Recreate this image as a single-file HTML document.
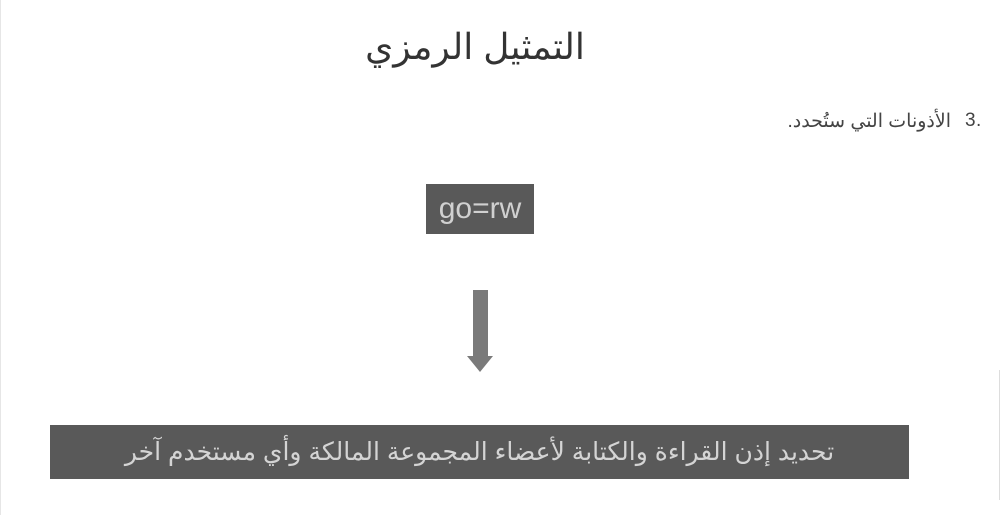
<!DOCTYPE html>
<html><head><meta charset="utf-8"><style>
body{margin:0;width:1001px;height:515px;background:#fff;position:relative;overflow:hidden;font-family:"Liberation Sans","Noto Sans CJK SC",sans-serif}
.a{position:absolute}
</style></head><body>
<div class="a" style="left:0;top:0;width:1px;height:515px;background:#e6e6e6"></div>
<div class="a" style="left:999px;top:370px;width:1px;height:130px;background:#ddd"></div>
<div class="a" style="left:300px;width:350px;top:26px;text-align:center;font-size:36px;color:#333;direction:rtl">التمثيل الرمزي</div>
<div class="a" style="left:965px;top:110px;font-size:19px;color:#444">3</div>
<div class="a" style="left:976px;top:110px;font-size:19px;color:#444">.</div>
<div class="a" style="right:50px;top:110px;font-size:19px;color:#444;direction:rtl;white-space:nowrap">الأذونات التي ستُحدد.</div>
<div class="a" style="left:426px;top:184px;width:108px;height:50px;background:#595959;color:#d0d0d0;font-size:30px;line-height:50px;text-align:center">go=rw</div>
<div class="a" style="left:473px;top:290px;width:15px;height:66px;background:#7a7a7a"></div>
<div class="a" style="left:467px;top:356px;width:0;height:0;border-left:13.5px solid transparent;border-right:13.5px solid transparent;border-top:16px solid #7a7a7a"></div>
<div class="a" style="left:50px;top:425px;width:859px;height:54px;background:#595959;color:#d4d4d4;font-size:25px;line-height:54px;text-align:center;direction:rtl">تحديد إذن القراءة والكتابة لأعضاء المجموعة المالكة وأي مستخدم آخر</div>
</body></html>
